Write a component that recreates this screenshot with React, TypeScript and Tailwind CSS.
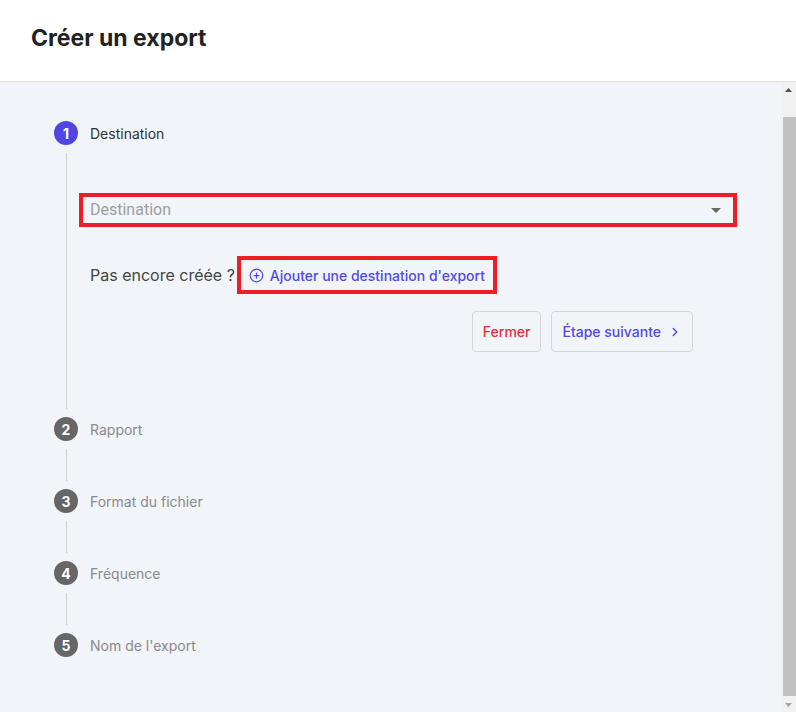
import React from 'react';
import { CirclePlus, ChevronRight } from 'lucide-react';

const steps = ['Destination', 'Rapport', 'Format du fichier', 'Fréquence', "Nom de l'export"];

const StepBadge: React.FC<{ n: number; active?: boolean }> = ({ n, active }) => (
    <div
        className={`w-6 h-6 rounded-full flex items-center justify-center text-white text-[14px] font-bold shrink-0 ${
            active ? 'bg-[#4f46e5]' : 'bg-[#666666]'
        }`}
    >
        {n}
    </div>
);

// the page is scrolled to the bottom: thumb sits low in the track
const ScrollBar: React.FC = () => (
    <div className="w-[15px] shrink-0 bg-[#f1f1f1] flex flex-col">
        <div className="h-[15px] flex items-center justify-center">
            <svg width="7" height="4" viewBox="0 0 7 4"><path d="M0 4L3.5 0L7 4z" fill="#505050" /></svg>
        </div>
        <div className="flex-1 pt-[20px] pb-px pl-[2px]">
            <div className="h-full bg-[#c1c1c1]" />
        </div>
        <div className="h-[15px] flex items-center justify-center">
            <svg width="7" height="4" viewBox="0 0 7 4"><path d="M0 0h7L3.5 4z" fill="#a3a3a3" /></svg>
        </div>
    </div>
);

const DestinationStep: React.FC = () => (
    <div className="pt-[48px] pb-[65px] pl-[12px] flex-1">
        {/* select, outlined in red */}
        <div className="mr-[44px] h-[34px] border-4 border-[#ee1c25] flex items-center justify-between pl-[7px] pr-[12px]">
            <span className="text-[16px] text-[#9e9e9e] font-['Roboto',sans-serif]">Destination</span>
            <svg width="10" height="5" viewBox="0 0 10 5"><path d="M0 0h10L5 5z" fill="#666" /></svg>
        </div>

        <div className="flex items-center mt-[29px] pl-[11px]">
            <span className="text-[16px] text-[#444]">Pas encore créée ?</span>
            <button className="ml-[2px] h-[38px] border-4 border-[#ee1c25] flex items-center gap-[6px] px-[8px] text-[14px] font-medium text-[#5249e6]">
                <CirclePlus size={15} strokeWidth={2} />
                Ajouter une destination d'export
            </button>
        </div>

        <div className="flex justify-end gap-[10px] mt-[17px] mr-[88px]">
            <button className="h-[41px] px-[10px] border border-[#d6d6d9] rounded text-[14px] font-medium text-[#e5303a]">Fermer</button>
            <button className="h-[41px] pl-[10px] pr-[10px] border border-[#d6d6d9] rounded text-[14px] font-medium text-[#5249e6] flex items-center gap-[7px]">
                Étape suivante
                <ChevronRight size={14} strokeWidth={2.5} />
            </button>
        </div>
    </div>
);

export default function App() {
    return (
        <div className="w-[796px] h-[712px] flex flex-col bg-white font-['Inter',sans-serif]">
            <div className="h-[82px] shrink-0 border-b border-[#e2e2e2] flex items-center pl-[31px] pb-1">
                <h1 className="text-[23px] font-bold text-[#222]">Créer un export</h1>
            </div>

            <div className="flex-1 flex min-h-0 bg-[#f1f4f9]">
                <div className="flex-1 overflow-hidden pt-[39px] pl-[54px]">
                    {steps.map((label, i) => (
                        <div key={label}>
                            <div className="flex items-center h-6">
                                <StepBadge n={i + 1} active={i === 0} />
                                <span className={`ml-[12px] text-[14px] ${i === 0 ? 'text-[#333]' : 'text-[#8a8a8a]'}`}>{label}</span>
                            </div>
                            {i < steps.length - 1 && (
                                <div className="flex">
                                    <div className="ml-[12px] w-px my-2 bg-[#cfcfcf]" />
                                    {i === 0 ? <DestinationStep /> : <div className="h-[48px]" />}
                                </div>
                            )}
                        </div>
                    ))}
                </div>
                <ScrollBar />
            </div>
        </div>
    );
}
